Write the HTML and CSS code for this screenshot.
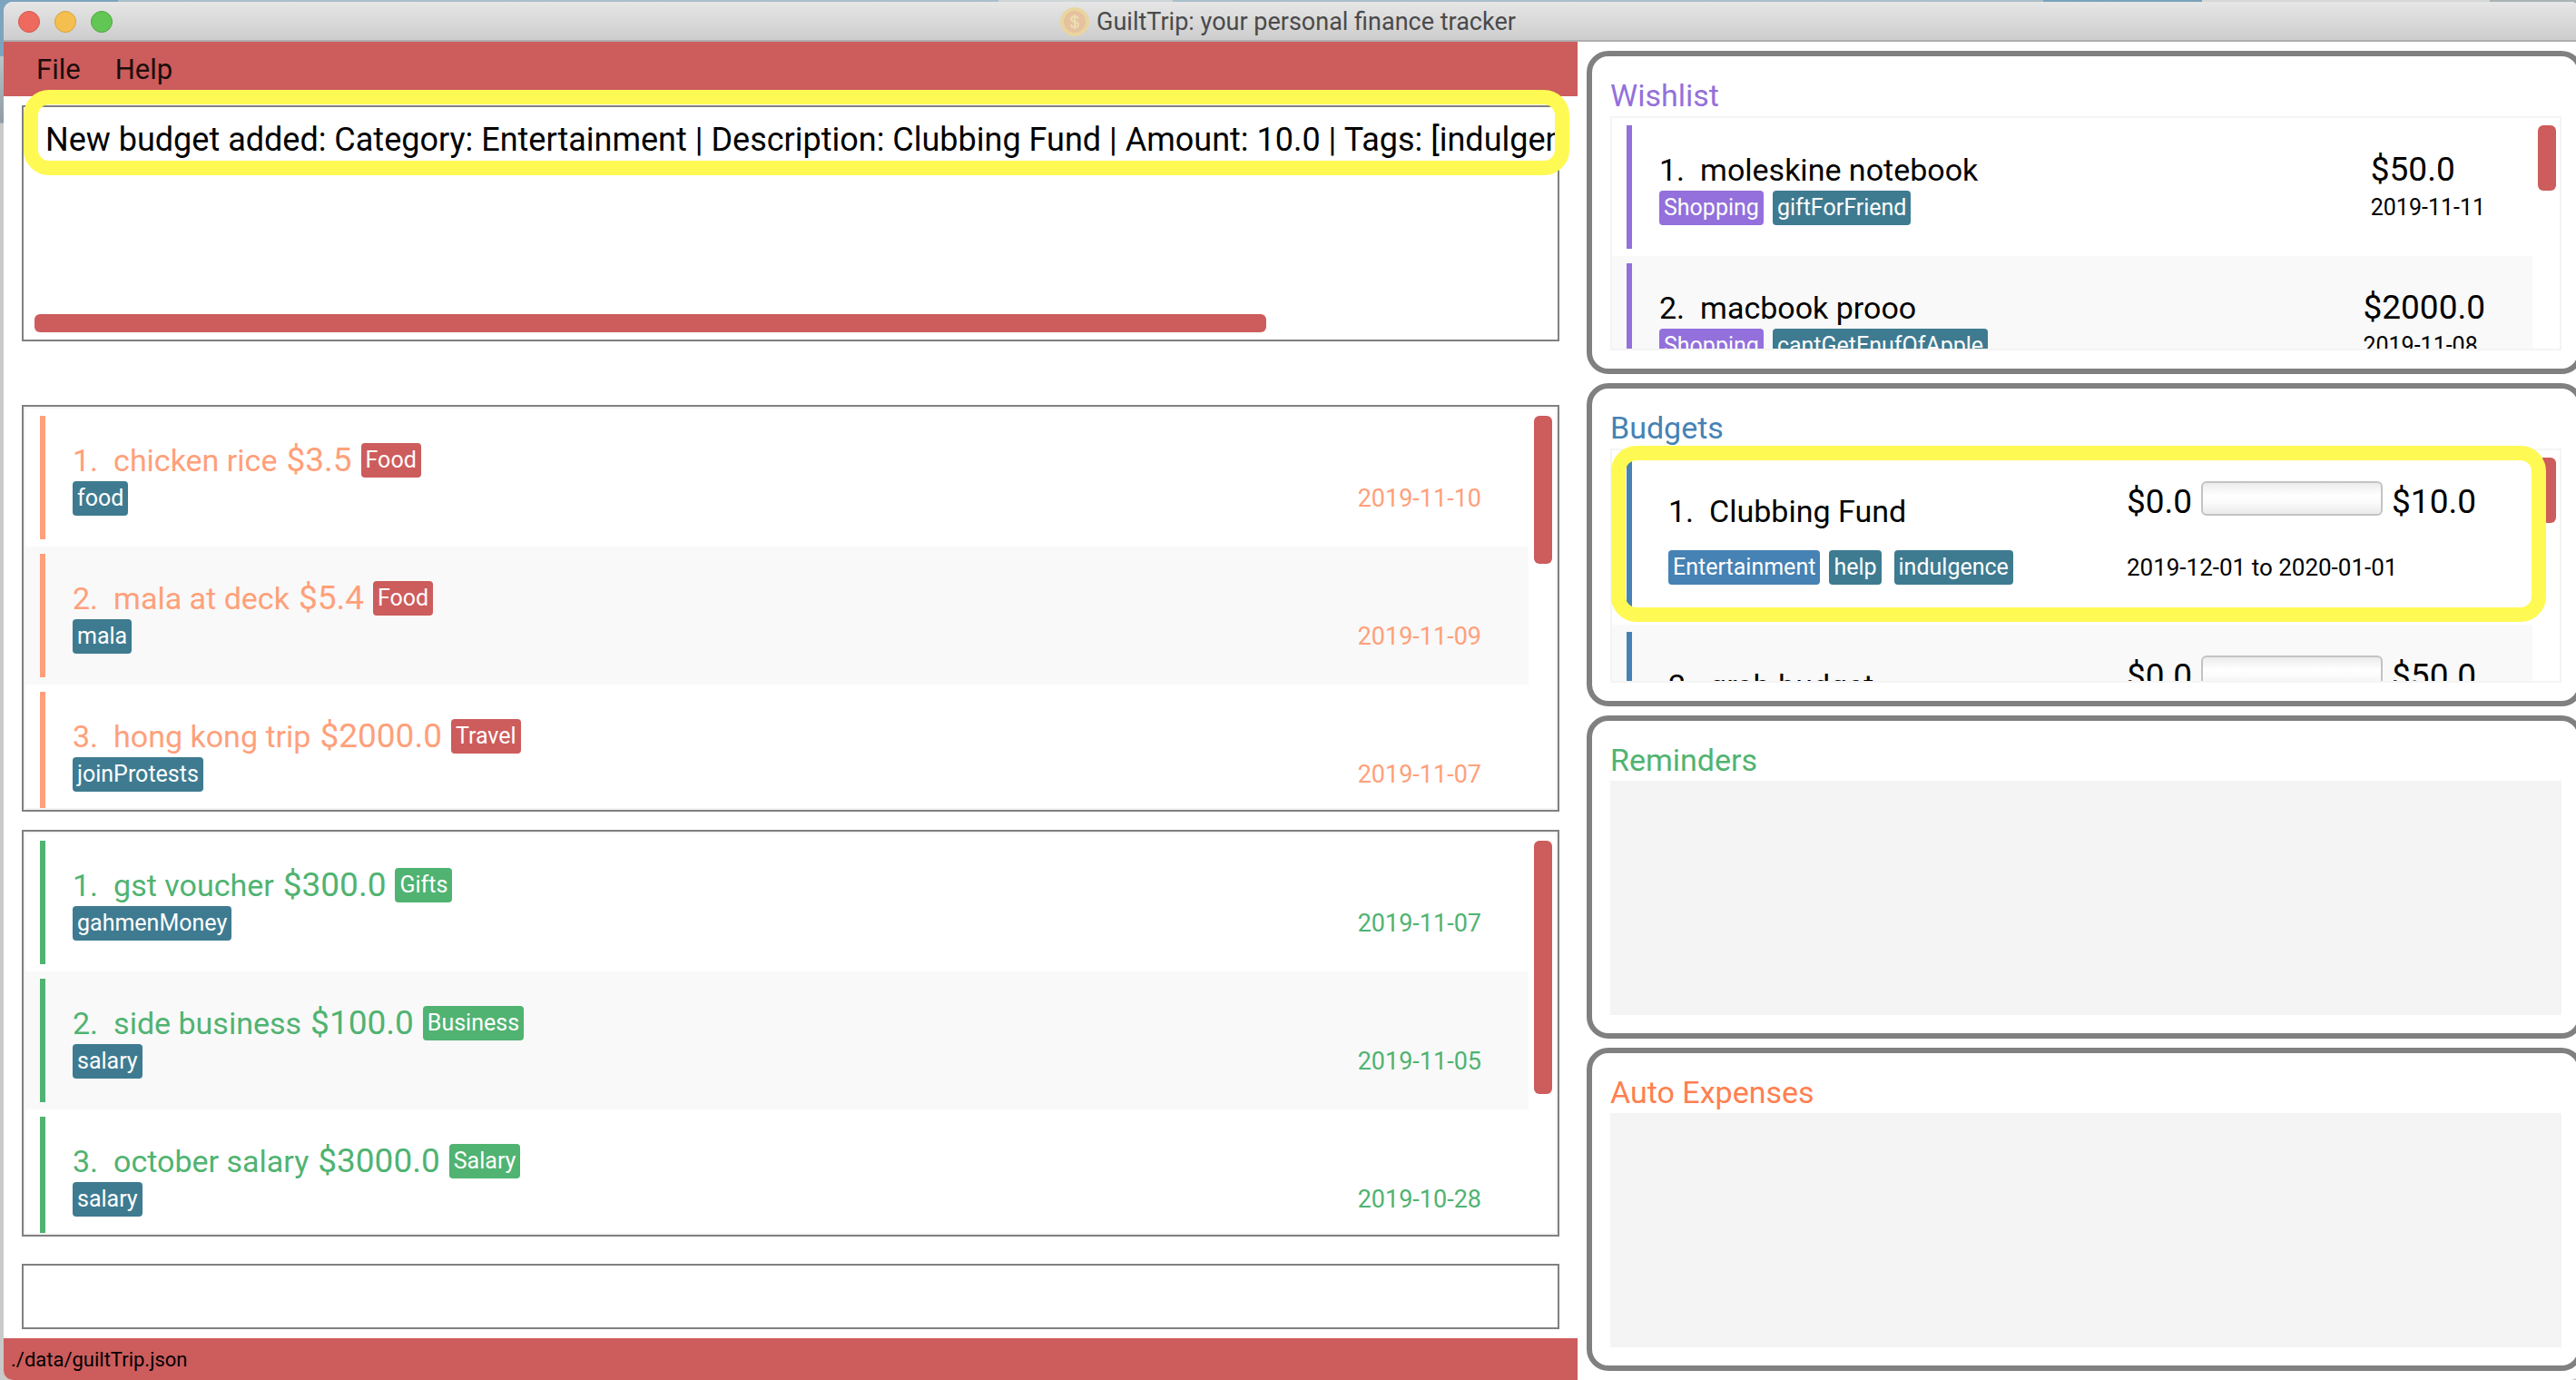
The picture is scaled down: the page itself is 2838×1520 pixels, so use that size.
FILE: index.html
```html
<!DOCTYPE html>
<html lang="en">
<head>
<meta charset="utf-8">
<title>GuiltTrip: your personal finance tracker</title>
<link rel="stylesheet" href="styles.css">
</head>
<body>
<div class="window">
  <header class="titlebar">
    <div class="lights">
      <button class="light light-close" type="button" aria-label="Close"></button>
      <button class="light light-minimize" type="button" aria-label="Minimize"></button>
      <button class="light light-zoom" type="button" aria-label="Zoom"></button>
    </div>
    <h1 class="title">
      <svg class="coin" viewBox="0 0 32 32" aria-hidden="true">
        <circle cx="16" cy="16" r="16" fill="#e8d5a0"/>
        <circle cx="16" cy="16" r="12" fill="#e6c29f"/>
        <path d="M20 12.500C19.500 11 18 10.200 16 10.200c-2.300 0-4 1-4 2.800 0 4 8 2 8 6 0 1.800-1.700 2.900-4 2.900-2.200 0-3.800-1-4.200-2.700M16 8v16" fill="none" stroke="#ecdfb4" stroke-width="2"/>
      </svg>
      <span>GuiltTrip: your personal finance tracker</span>
    </h1>
  </header>

  <div class="columns">
    <main class="left">
      <nav class="menubar">
        <button class="menu" type="button">File</button>
        <button class="menu" type="button">Help</button>
      </nav>

      <section class="result">
        <p class="result-text">New budget added: Category: Entertainment | Description: Clubbing Fund | Amount: 10.0 | Tags: [indulgence]</p>
        <div class="hthumb"></div>
        <div class="ring ring-result"></div>
      </section>

      <section class="panel expenses">
        <ul class="rows">
          <li class="row">
            <div class="info">
              <div class="line"><span>1.</span><span class="name">chicken rice</span><span class="price">$3.5</span><span class="tag tag-expense">Food</span></div>
              <div class="line"><span class="tag">food</span></div>
            </div>
            <time class="date">2019-11-10</time>
          </li>
          <li class="row">
            <div class="info">
              <div class="line"><span>2.</span><span class="name">mala at deck</span><span class="price">$5.4</span><span class="tag tag-expense">Food</span></div>
              <div class="line"><span class="tag">mala</span></div>
            </div>
            <time class="date">2019-11-09</time>
          </li>
          <li class="row">
            <div class="info">
              <div class="line"><span>3.</span><span class="name">hong kong trip</span><span class="price">$2000.0</span><span class="tag tag-expense">Travel</span></div>
              <div class="line"><span class="tag">joinProtests</span></div>
            </div>
            <time class="date">2019-11-07</time>
          </li>
        </ul>
        <div class="track"><div class="thumb thumb-expenses"></div></div>
      </section>

      <section class="panel incomes">
        <ul class="rows">
          <li class="row">
            <div class="info">
              <div class="line"><span>1.</span><span class="name">gst voucher</span><span class="price">$300.0</span><span class="tag tag-income">Gifts</span></div>
              <div class="line"><span class="tag">gahmenMoney</span></div>
            </div>
            <time class="date">2019-11-07</time>
          </li>
          <li class="row">
            <div class="info">
              <div class="line"><span>2.</span><span class="name">side business</span><span class="price">$100.0</span><span class="tag tag-income">Business</span></div>
              <div class="line"><span class="tag">salary</span></div>
            </div>
            <time class="date">2019-11-05</time>
          </li>
          <li class="row">
            <div class="info">
              <div class="line"><span>3.</span><span class="name">october salary</span><span class="price">$3000.0</span><span class="tag tag-income">Salary</span></div>
              <div class="line"><span class="tag">salary</span></div>
            </div>
            <time class="date">2019-10-28</time>
          </li>
        </ul>
        <div class="track"><div class="thumb thumb-incomes"></div></div>
      </section>

      <input class="command" type="text" aria-label="Command">
      <footer class="status">./data/guiltTrip.json</footer>
    </main>

    <aside class="right">
      <section class="card wishes">
        <h2 class="heading">Wishlist</h2>
        <div class="list">
          <ul class="rows">
            <li class="row">
              <div class="info">
                <div class="line"><span>1.</span><span class="name">moleskine notebook</span></div>
                <div class="line"><span class="tag tag-wish">Shopping</span><span class="tag">giftForFriend</span></div>
              </div>
              <div class="side">
                <div class="line amount">$50.0</div>
                <time class="date">2019-11-11</time>
              </div>
            </li>
            <li class="row">
              <div class="info">
                <div class="line"><span>2.</span><span class="name">macbook prooo</span></div>
                <div class="line"><span class="tag tag-wish">Shopping</span><span class="tag">cantGetEnufOfApple</span></div>
              </div>
              <div class="side">
                <div class="line amount">$2000.0</div>
                <time class="date">2019-11-08</time>
              </div>
            </li>
          </ul>
          <div class="track"><div class="thumb"></div></div>
        </div>
      </section>

      <section class="card budgets">
        <h2 class="heading">Budgets</h2>
        <div class="list">
          <ul class="rows">
            <li class="row">
              <div class="info">
                <div class="line"><span>1.</span><span class="name">Clubbing Fund</span></div>
                <div class="line"><span class="tag tag-budget">Entertainment</span><span class="tags"><span class="tag">help</span><span class="tag">indulgence</span></span></div>
              </div>
              <div class="side">
                <div class="line amount"><span>$0.0</span><progress class="meter" value="0" max="10" aria-label="Clubbing Fund spent"></progress><span>$10.0</span></div>
                <div class="date">2019-12-01 to 2020-01-01</div>
              </div>
            </li>
            <li class="row">
              <div class="info">
                <div class="line"><span>2.</span><span class="name">grab budget</span></div>
              </div>
              <div class="side">
                <div class="line amount"><span>$0.0</span><progress class="meter" value="0" max="50" aria-label="Grab budget spent"></progress><span>$50.0</span></div>
              </div>
            </li>
          </ul>
          <div class="track"><div class="thumb"></div></div>
          <div class="ring ring-budget"></div>
        </div>
      </section>

      <section class="card reminders">
        <h2 class="heading">Reminders</h2>
        <div class="list list-empty"></div>
      </section>

      <section class="card autos">
        <h2 class="heading">Auto Expenses</h2>
        <div class="list list-empty"></div>
      </section>
    </aside>
  </div>
</div>
</body>
</html>
```
FILE: styles.css
```css
* {
  box-sizing: border-box;
}

html {
  height: 100%;
}

body {
  margin: 0;
  height: 100%;
  padding: 2px 0 0 4px;
  overflow: hidden;
  background:
    linear-gradient(90deg, #7da4bf 130px, #a9bfca 130px 1100px, #ced6d8 1100px 1292px, #a9bfca 1292px 2251px, #7aa2bb 2251px 2426px, #d5d8d5 2426px 2743px, #a9b3b5 2743px) top / 100% 8px no-repeat,
    linear-gradient(#7da4bf 62px, #b9c3ca 62px, #8f9ba5 135px, #c9c9c9 136px);
  font-family: Roboto, "Liberation Sans", sans-serif;
  color: #000;
}

h1, h2, p, ul {
  margin: 0;
  padding: 0;
  font-weight: 400;
  list-style: none;
}

.window {
  display: flex;
  flex-direction: column;
  height: 100%;
  margin-right: -4px;
  border-radius: 10px;
  overflow: hidden;
  background: #fff;
}

/* Title bar */
.titlebar {
  display: grid;
  grid-template-columns: 1fr auto 1fr;
  align-items: center;
  height: 44px;
  flex: none;
  padding: 2px 24px 0 16px;
  background: linear-gradient(#e6e6e6, #cdcdcd);
  border-bottom: 2px solid #adadad;
}

.lights {
  display: flex;
  gap: 16px;
}

.light {
  width: 24px;
  height: 24px;
  padding: 0;
  border: 1px solid;
  border-radius: 50%;
}

.light-close { background: #ee6a5f; border-color: #d5564b; }
.light-minimize { background: #f5bf4f; border-color: #d8a13a; }
.light-zoom { background: #62c655; border-color: #4ea73f; }

.title {
  display: flex;
  align-items: center;
  gap: 8px;
  font-size: 27px;
  line-height: 32px;
  color: #4a4a4a;
}

.coin {
  width: 32px;
  height: 32px;
}

/* Two main columns */
.columns {
  display: grid;
  grid-template-columns: 1734fr 1104fr;
  flex: 1;
  min-height: 0;
}

.left {
  display: flex;
  flex-direction: column;
  min-width: 0;
  min-height: 0;
}

.menubar {
  display: flex;
  flex: none;
  gap: 38px;
  height: 60px;
  padding-left: 36px;
  background: #cd5c5c;
}

.menu {
  padding: 0;
  border: 0;
  background: none;
  font: inherit;
  font-size: 31px;
  color: #1c0c0c;
}

/* Result box */
.result {
  position: relative;
  display: flex;
  flex-direction: column;
  justify-content: space-between;
  flex: none;
  height: 260px;
  margin: 10px 20px 70px;
  padding: 15px 0 8px;
  border: 2px solid #808080;
}

.result-text {
  padding-left: 24px;
  overflow: hidden;
  white-space: nowrap;
  font-size: 36px;
  line-height: 42px;
}

.hthumb {
  width: 80.3%;
  height: 20px;
  margin-left: 12px;
  border-radius: 6px;
  background: #cd5c5c;
}

/* Yellow callout rings */
.ring {
  position: absolute;
  border: 16px solid #fff953;
  border-radius: 28px;
  pointer-events: none;
}

.ring-result {
  top: -19px;
  left: 0;
  right: -13px;
  height: 94px;
}

.ring-budget {
  top: -5px;
  left: -1px;
  right: 15px;
  height: 194px;
}

/* Lists */
.panel {
  display: flex;
  flex: 1;
  min-height: 0;
  margin: 0 20px 20px;
  border: 2px solid #808080;
  box-shadow: inset 0 0 0 2px #f4f4f4;
  padding: 2px;
}

.incomes {
  margin-bottom: 30px;
}

.rows {
  flex: 1;
  min-width: 0;
  overflow: hidden;
}

.row {
  display: flex;
  justify-content: space-between;
  height: 152px;
  padding: 8px 52px 8px 16px;
}

.row:nth-child(even) {
  background: #f9f9f9;
}

.info {
  display: flex;
  flex: 1;
  flex-direction: column;
  gap: 4px;
  padding: 30px 0 0 30px;
  border-left: 6px solid;
}

.line {
  display: flex;
  align-items: center;
  gap: 10px;
  height: 38px;
  font-size: 34px;
  line-height: 38px;
  white-space: nowrap;
}

.name {
  margin-left: 7px;
}

.price {
  font-size: 37px;
}

.tags {
  display: flex;
  gap: 14px;
}

.tag {
  height: 38px;
  padding: 0 5px;
  border-radius: 4px;
  background: #3e7b91;
  font-size: 25px;
  color: #fff;
}

.tag-expense { background: #cd5c5c; }
.tag-income { background: #50b371; }
.tag-wish { background: #9370db; }
.tag-budget { background: #4682b4; }

.date {
  align-self: flex-start;
  font-size: 27px;
  line-height: 38px;
  white-space: nowrap;
}

.panel .date {
  margin-top: 72px;
}

.expenses { color: #ffa07a; }
.incomes { color: #50b371; }

.track {
  flex: none;
  width: 30px;
  padding: 8px 4px 0 6px;
}

.thumb {
  height: 72px;
  border-radius: 6px;
  background: #cd5c5c;
}

.thumb-expenses { height: 163px; }
.thumb-incomes { height: 279px; }

/* Command box and status bar */
.command {
  flex: none;
  height: 72px;
  margin: 0 20px 10px;
  padding: 0 20px;
  border: 2px solid #808080;
  border-radius: 0;
  background: #fff;
  font: inherit;
  font-size: 34px;
}

.status {
  flex: none;
  height: 46px;
  padding-left: 8px;
  background: #cd5c5c;
  font-size: 22px;
  line-height: 48px;
}

/* Right-hand cards */
.right {
  display: flex;
  flex-direction: column;
  gap: 10px;
  min-width: 0;
  min-height: 0;
  margin-right: -4px;
  padding: 10px 0 10px 10px;
}

.card {
  display: flex;
  flex: 1;
  flex-direction: column;
  min-height: 0;
  padding: 23px 18px 20px 20px;
  border: 6px solid #808080;
  border-radius: 24px;
}

.heading {
  flex: none;
  margin-bottom: 3px;
  font-size: 34px;
  line-height: 40px;
}

.wishes .heading, .wishes .info { color: #9370db; }
.budgets .heading, .budgets .info { color: #4682b4; }
.reminders .heading { color: #50b371; }
.autos .heading { color: #ff7f50; }

.card .name, .card .line {
  color: #000;
}

.list {
  position: relative;
  display: flex;
  flex: 1;
  min-height: 0;
  border: 2px solid #f4f4f4;
}

.list-empty {
  background: #f4f4f4;
}

.side {
  display: flex;
  flex-direction: column;
  gap: 4px;
  padding-top: 30px;
}

.card .tag {
  color: #fff;
}

.amount {
  font-size: 37px;
}

.wishes .date {
  font-size: 25px;
}

.budgets .date {
  font-size: 26px;
}

.budgets .row {
  height: 192px;
}

.budgets .info {
  gap: 24px;
  padding: 40px 0 0 40px;
}

.budgets .side {
  gap: 38px;
  padding: 26px 10px 0 0;
}

.budgets .amount {
  align-items: flex-end;
  line-height: 30px;
}

.meter {
  appearance: none;
  width: 200px;
  height: 38px;
  border: 2px solid #c3c3c3;
  border-radius: 6px;
  overflow: hidden;
  background: linear-gradient(#ececec, #fff 40%, #fcfcfc 60%, #ebebeb);
}

.meter::-webkit-progress-bar {
  background: none;
}
```
